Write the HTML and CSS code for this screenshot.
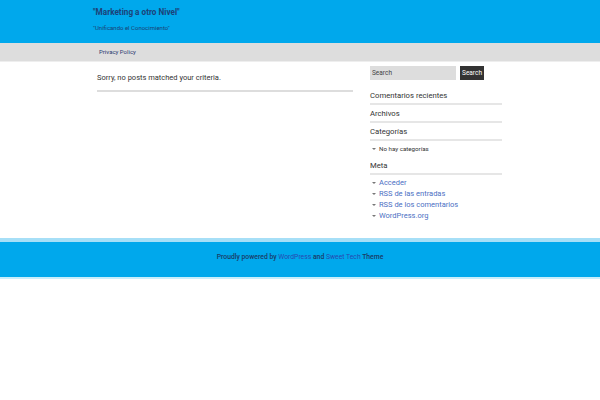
FILE: index.html
```html
<!DOCTYPE html>
<html>
<head>
<meta charset="utf-8">
<link rel="stylesheet" href="styles.css">
</head>
<body>
<header class="site-header">
  <div class="wrap">
    <div class="site-title">"Marketing a otro Nivel"</div>
    <div class="site-desc">"Unificando el Conocimiento"</div>
  </div>
</header>
<nav class="site-nav">
  <div class="wrap"><a class="nav-link" href="#">Privacy Policy</a></div>
</nav>
<div class="content">
  <main class="main">
    <p class="notfound">Sorry, no posts matched your criteria.</p>
    <div class="rule"></div>
  </main>
  <aside class="sidebar">
    <form class="search">
      <input class="search-input" type="text" placeholder="Search">
      <button class="search-btn" type="button">Search</button>
    </form>
    <h3 class="widget-title">Comentarios recientes</h3>
    <h3 class="widget-title">Archivos</h3>
    <h3 class="widget-title">Categorías</h3>
    <ul class="list small">
      <li>No hay categorías</li>
    </ul>
    <h3 class="widget-title meta">Meta</h3>
    <ul class="list links">
      <li><a href="#">Acceder</a></li>
      <li><a href="#">RSS de las entradas</a></li>
      <li><a href="#">RSS de los comentarios</a></li>
      <li><a href="#">WordPress.org</a></li>
    </ul>
  </aside>
</div>
<footer class="site-footer">
  Proudly powered by <a href="#">WordPress</a> and <a href="#">Sweet Tech</a> Theme
</footer>
</body>
</html>
```
FILE: styles.css
```css
* { box-sizing: border-box; }
body {
  margin: 0;
  font-family: Roboto, "Noto Sans", sans-serif;
  color: #333;
  background: #fff;
}
a { text-decoration: none; }
.wrap { margin-left: 93px; }
.site-header {
  background: #00a8ec;
  height: 43px;
  padding-top: 6px;
}
.site-title {
  font-size: 8.2px;
  font-weight: 700;
  color: #1d4278;
  line-height: 12px;
}
.site-desc {
  font-size: 6px;
  color: #1b3f74;
  margin-top: 6px;
  line-height: 8px;
}
.site-nav {
  background: #dddddd;
  height: 19px;
  border-bottom: 1px solid #eee;
  font-size: 6px;
  line-height: 18px;
}
.site-nav .wrap { padding-left: 6px; }
.nav-link { color: #2b3a70; }
.content {
  display: flex;
  margin-left: 97px;
  width: 405px;
  gap: 17px;
  padding-top: 4px;
  min-height: 176px;
}
.main { width: 256px; }
.notfound {
  font-size: 7.5px;
  margin: 7px 0 0;
  line-height: 10px;
}
.rule {
  height: 2px;
  background: #ddd;
  margin-top: 7px;
}
.sidebar { width: 132px; }
.search { display: flex; gap: 4px; margin: 0 0 11px; }
.search-input {
  width: 86px;
  height: 14px;
  border: none;
  background: #dddddd;
  font: 6.5px Roboto, sans-serif;
  padding: 0 2px;
  color: #333;
}
.search-input::placeholder { color: #444; }
.search-btn {
  height: 14px;
  width: 24px;
  border: none;
  background: #333;
  color: #fff;
  font: 6.5px Roboto, sans-serif;
  padding: 0;
}
.widget-title {
  font-size: 7.7px;
  font-weight: normal;
  margin: 4px 0 0;
  padding-bottom: 2px;
  line-height: 10px;
  border-bottom: 2px solid #e6e6e6;
}
.sidebar .search + .widget-title { margin-top: 0; }
.widget-title.meta { margin-top: 8px; }
.list {
  list-style: none;
  margin: 4px 0 0;
  padding: 0;
}
.list li {
  position: relative;
  padding-left: 9px;
}
.list li::before {
  content: "";
  position: absolute;
  left: 2px;
  top: 3px;
  border-left: 2px solid transparent;
  border-right: 2px solid transparent;
  border-top: 2.5px solid #777;
}
.small li { font-size: 6.2px; line-height: 8px; }
.links { margin-top: 2px; }
.links li { font-size: 7.5px; line-height: 11px; }
.links li::before { top: 4.5px; }
.links a { color: #4b6fc3; }
.site-footer {
  background: #00a8ec;
  border-top: 4px solid #a6dff7;
  border-bottom: 2px solid #c9eefb;
  height: 41px;
  text-align: center;
  font-size: 6.8px;
  font-weight: 500;
  line-height: 30px;
  color: #1b3a66;
}
.site-footer a { color: #2848b0; font-weight: 400; }
```
